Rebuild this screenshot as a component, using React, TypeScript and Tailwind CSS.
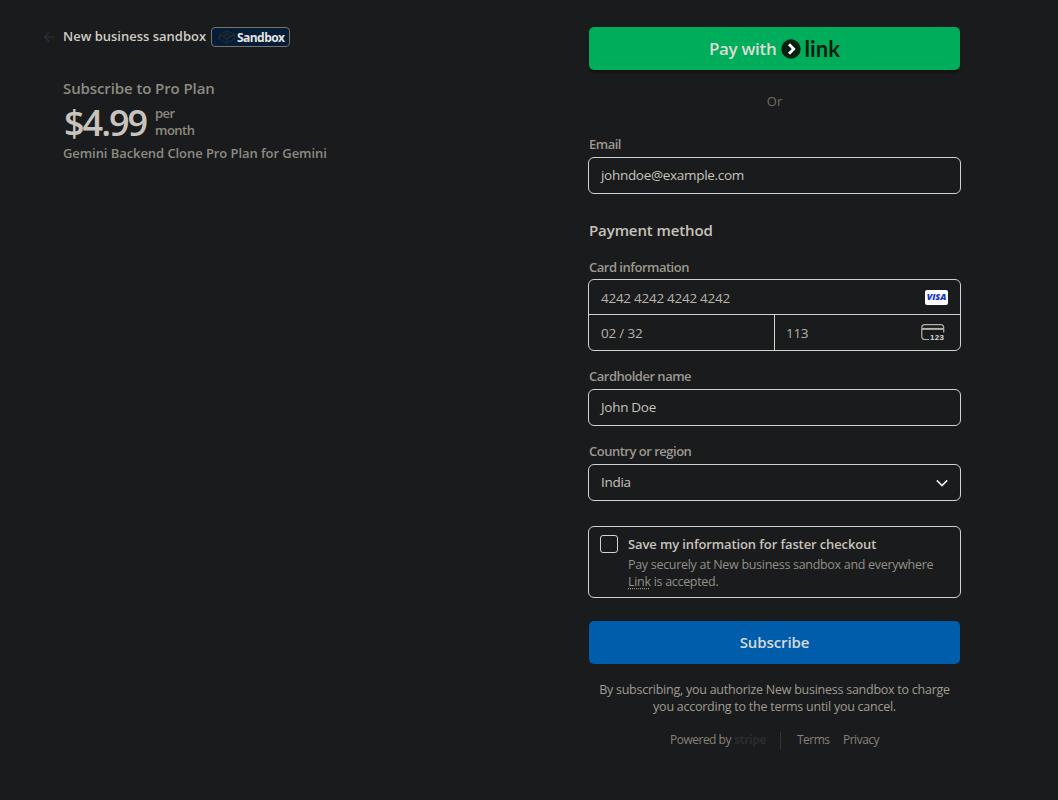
import { ReactNode } from 'react';

function FieldLabel({ children }: { children: ReactNode }) {
  return (
    <div className="ml-px h-4 text-[13px] font-semibold leading-4 tracking-[-0.5px] text-[#9d9890]">
      {children}
    </div>
  );
}

function TextField({ value, children }: { value: string; children?: ReactNode }) {
  return (
    <div className="flex h-[37px] items-center justify-between rounded-md border border-[#d5d2cd] px-3 text-[13.5px] tracking-[-0.3px] text-[#c8c3bc]">
      <span>{value}</span>
      {children}
    </div>
  );
}

function SandboxIcon() {
  return (
    <svg width="18" height="14" viewBox="0 0 18 14" fill="none" stroke="#25292d" strokeWidth="1.3" strokeLinejoin="round">
      <path d="M9 1 16.5 4.5V9.5L9 13 1.5 9.5V4.5Z" />
      <path d="M9 4 13 6.5 9 9 5 6.5ZM9 1V4M9 9V13M1.5 4.5 5 6.5M16.5 4.5 13 6.5" />
    </svg>
  );
}

function CvcIcon() {
  return (
    <div className="relative h-[18px] w-6">
      <svg width="24" height="18" viewBox="0 0 24 18" fill="none">
        <path d="M8 15.5H3.5A2.7 2.7 0 0 1 .8 12.8V3.4A2.7 2.7 0 0 1 3.5.7H20A2.7 2.7 0 0 1 22.7 3.4V8.5" stroke="#b5b0a8" strokeWidth="1.2" />
        <path d="M1 4.9H22.7" stroke="#b5b0a8" strokeWidth="2" />
      </svg>
      <span className="absolute left-[9px] top-[9px] font-['Liberation_Sans'] text-[8px] font-bold leading-[9px] tracking-[0.3px] text-[#dedbd6]">
        123
      </span>
    </div>
  );
}

function Summary() {
  return (
    <section className="w-[508px] pt-[27px]">
      <div className="flex h-5 items-center pl-[43px]">
        <svg width="12" height="12" viewBox="0 0 12 12" fill="none" stroke="#2b2e30" strokeWidth="1.5">
          <path d="M11.5 6H1.5M6 1.5 1.5 6 6 10.5" />
        </svg>
        <span className="ml-2 w-[148px] whitespace-nowrap text-[13px] font-semibold text-[#d0ccc6]">
          New business sandbox
        </span>
        <div className="flex h-5 w-[79px] items-center rounded border border-[#77736b] bg-[#061d37] pl-[6px]">
          <SandboxIcon />
          <span className="ml-[1px] pt-px text-[12px] font-bold tracking-[-0.55px] text-[#e6e4e1]">Sandbox</span>
        </div>
      </div>

      <div className="pl-[63px] font-semibold text-[#8f8a82]">
        <div className="mt-[30px] h-[22px] text-[15px] leading-[22px] tracking-[-0.1px]">Subscribe to Pro Plan</div>
        <div className="flex h-[46px] items-center">
          <span className="w-[92px] pl-px pt-px text-[36px] leading-[46px] tracking-[-2px] text-[#c8c3bc]">$4.99</span>
          <span className="w-12 text-[13px] leading-[17px] tracking-[-0.5px]">per month</span>
        </div>
        <div className="h-4 text-[13px] leading-4 tracking-[-0.07px]">Gemini Backend Clone Pro Plan for Gemini</div>
      </div>
    </section>
  );
}

function LinkButton() {
  return (
    <button className="mx-px flex h-[43px] items-center justify-center rounded-[5px] bg-[#00ad5a] shadow-[0_3px_2px_#121313]">
      <span className="text-[17px] font-semibold tracking-[-0.3px] text-[#dedbd6]">Pay with</span>
      <svg className="ml-[5px]" width="20" height="20" viewBox="0 0 20 20">
        <circle cx="10" cy="10" r="9.7" fill="#011e0f" />
        <path d="M8 5.2 12.7 10 8 14.8" fill="none" stroke="#fff" strokeWidth="2.8" />
      </svg>
      <span className="ml-[3px] font-['Lato'] text-[22px] font-bold leading-6 tracking-[0.1px] text-[#011e0f]">link</span>
    </button>
  );
}

function PaymentForm() {
  return (
    <section className="ml-20 flex w-[373px] flex-col pt-[27px]">
      <LinkButton />
      <div className="mt-[21px] h-5 text-center text-[13px] leading-5 text-[#736f68]">Or</div>

      <div className="mt-[25px]">
        <FieldLabel>Email</FieldLabel>
      </div>
      <div className="mt-[5px]">
        <TextField value="johndoe@example.com" />
      </div>

      <h2 className="ml-px mt-[25px] h-[22px] text-[15px] font-semibold leading-[22px] tracking-[-0.1px] text-[#c8c3bc]">
        Payment method
      </h2>

      <div className="mt-[18px]">
        <FieldLabel>Card information</FieldLabel>
      </div>
      <div className="mt-1 h-[72px] rounded-md border border-[#d5d2cd] text-[13.5px] tracking-[-0.3px] text-[#b8b3ab]">
        <div className="flex h-[35px] items-center justify-between border-b border-[#d5d2cd] px-3">
          <span className="pt-[3px] tracking-[-0.27px]">4242 4242 4242 4242</span>
          <span className="flex h-[15px] w-[23px] items-center justify-center rounded-[2px] bg-white font-['Open_Sans'] text-[9px] font-extrabold italic tracking-[-0.1px] text-[#1434cb]">
            VISA
          </span>
        </div>
        <div className="flex h-[35px]">
          <div className="flex w-[186px] items-center border-r border-[#d5d2cd] pl-3 pt-px tracking-[-0.2px]">02 / 32</div>
          <div className="flex flex-1 items-center justify-between pl-[11px] pr-[15px]">
            <span className="pt-px">113</span>
            <CvcIcon />
          </div>
        </div>
      </div>

      <div className="mt-[17px]">
        <FieldLabel>Cardholder name</FieldLabel>
      </div>
      <div className="mt-[5px]">
        <TextField value="John Doe" />
      </div>

      <div className="mt-[17px]">
        <FieldLabel>Country or region</FieldLabel>
      </div>
      <div className="mt-[5px]">
        <TextField value="India">
          <svg width="12" height="8" viewBox="0 0 12 8" fill="none" stroke="#e8e6e3" strokeWidth="1.7">
            <path d="M.8 1.3 6 6.5 11.2 1.3" />
          </svg>
        </TextField>
      </div>

      {/* Link opt-in */}
      <div className="mt-[25px] flex h-[72px] rounded-md border border-[#d5d2cd] pl-[11px] pt-2">
        <div className="h-[18px] w-[18px] rounded-[3px] border border-[#d5d2cd]" />
        <div className="ml-[10px] whitespace-nowrap">
          <div className="h-[18px] text-[13px] font-semibold leading-[18px] tracking-[-0.12px] text-[#c8c3bc]">
            Save my information for faster checkout
          </div>
          <div className="mt-[3px] text-[12.5px] leading-[17px] tracking-[-0.3px] text-[#948f87]">
            Pay securely at New business sandbox and everywhere
            <br />
            <span className="underline decoration-dotted underline-offset-2">Link</span> is accepted.
          </div>
        </div>
      </div>

      <button className="mx-px mt-[23px] h-[43px] rounded-[5px] bg-[#005dab] text-[15px] font-semibold tracking-[-0.1px] text-[#d8d9dc]">
        Subscribe
      </button>

      <p className="mt-[17px] whitespace-nowrap text-center text-[12.5px] leading-[17px] tracking-[-0.25px] text-[#a09b93]">
        By subscribing, you authorize New business sandbox to charge
        <br />
        you according to the terms until you cancel.
      </p>

      <footer className="mt-4 flex h-[18px] items-center pl-[82px] text-[12px] tracking-[-0.5px] text-[#87827a]">
        <span className="w-16 whitespace-nowrap">Powered by</span>
        <span className="w-[46px] font-bold text-[#292b2d]">stripe</span>
        <span className="h-[17px] w-px bg-[#303335]" />
        <span className="ml-4 w-[46px]">Terms</span>
        <span>Privacy</span>
      </footer>
    </section>
  );
}

export default function App() {
  return (
    <div className="flex h-[800px] w-[1058px] overflow-hidden bg-[#191b1c] font-['Open_Sans','Noto_Sans',sans-serif]">
      <Summary />
      <PaymentForm />
    </div>
  );
}
